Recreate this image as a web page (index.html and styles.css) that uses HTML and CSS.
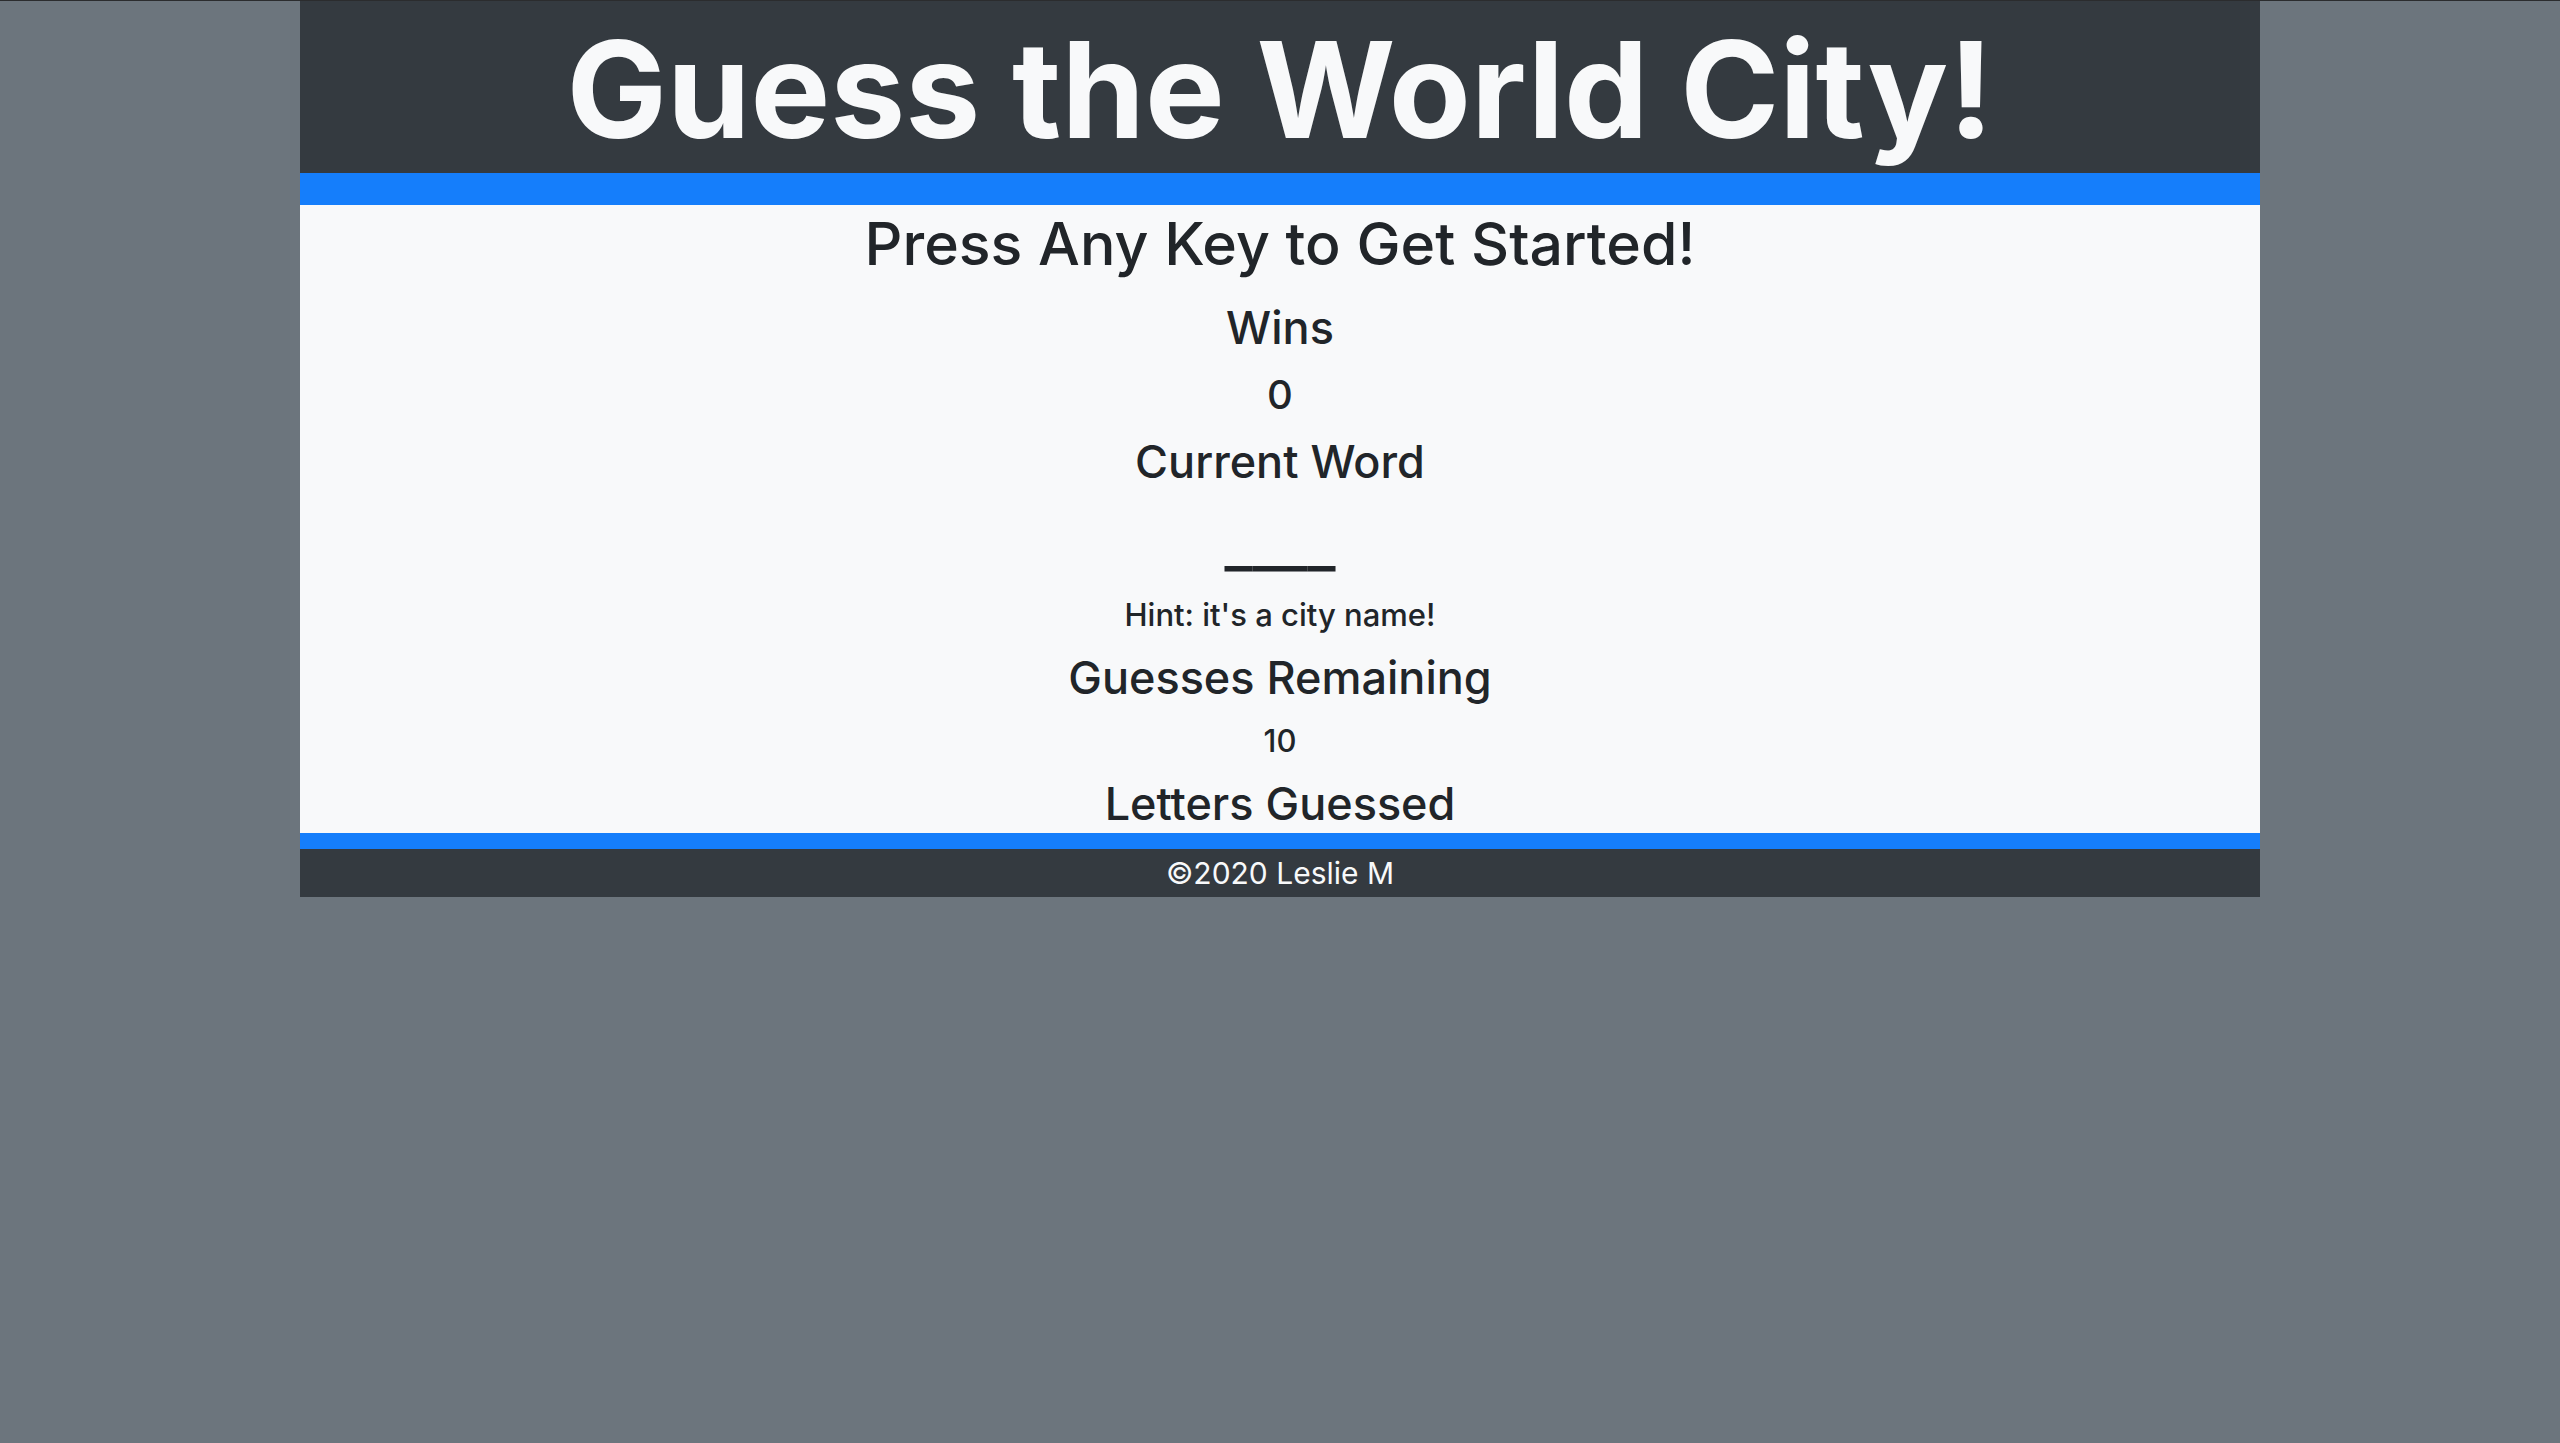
FILE: index.html
```html
<!DOCTYPE html>
<html lang="en">
<head>
<meta charset="utf-8">
<meta name="viewport" content="width=device-width, initial-scale=1">
<title>Guess the World City!</title>
<link rel="stylesheet" href="styles.css">
</head>
<body>
<div class="container">
  <header class="banner"><h1 class="title">Guess the World City!</h1></header>
  <main class="game">
    <h2 class="start">Press Any Key to Get Started!</h2>
    <h3 class="label">Wins</h3>
    <p class="wins">0</p>
    <h3 class="label">Current Word</h3>
    <p class="word">____</p>
    <p class="small">Hint: it's a city name!</p>
    <h3 class="label">Guesses Remaining</h3>
    <p class="small">10</p>
    <h3 class="label">Letters Guessed</h3>
  </main>
  <footer class="footer">©2020 Leslie M</footer>
</div>
</body>
</html>
```
FILE: styles.css
```css
* { box-sizing: border-box; }
body {
  margin: 0;
  border-top: 1px solid #2b2c2e;
  background: #6c757d;
  color: #212529;
  font-family: Inter, "Liberation Sans", sans-serif;
  font-weight: 500;
  text-align: center;
}
h1, h2, h3, p { margin: 0; }
.container { max-width: 1960px; margin: 0 auto; }
.banner {
  padding-top: 4px;
  background: #343a40;
  border-bottom: 32px solid #157efb;
  color: #f8f9fa;
}
.title { font-size: 134px; font-weight: 700; line-height: 168px; }
.game {
  display: flex;
  flex-direction: column;
  gap: 16px;
  background: #f8f9fa;
  border-bottom: 16px solid #157efb;
}
.start { font-size: 59px; font-weight: 500; line-height: 78px; }
.label { font-size: 45px; font-weight: 500; line-height: 58px; }
.wins { font-size: 40px; line-height: 44px; }
.word { font-size: 60px; line-height: 74px; }
.small { font-size: 31px; line-height: 36px; }
.footer {
  background: #343a40;
  color: #f8f9fa;
  font-size: 30px;
  font-weight: 400;
  line-height: 48px;
}
```
